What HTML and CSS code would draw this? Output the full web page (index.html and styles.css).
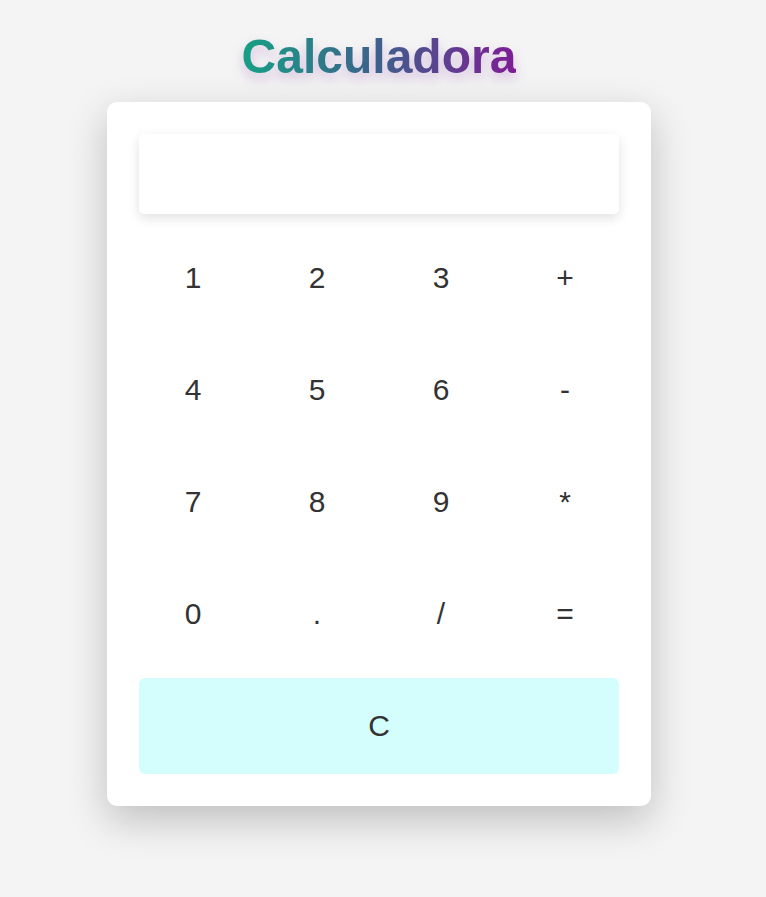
FILE: index.html
```html
<!DOCTYPE html>
<html lang="es">
<head>
<meta charset="utf-8">
<title>Calculadora</title>
<link rel="stylesheet" href="styles.css">
</head>
<body>
<main class="app">
  <h1 class="title">Calculadora</h1>
  <div class="calculator">
    <input class="display" type="text" readonly>
    <div class="keys">
      <button class="key">1</button>
      <button class="key">2</button>
      <button class="key">3</button>
      <button class="key">+</button>
      <button class="key">4</button>
      <button class="key">5</button>
      <button class="key">6</button>
      <button class="key">-</button>
      <button class="key">7</button>
      <button class="key">8</button>
      <button class="key">9</button>
      <button class="key">*</button>
      <button class="key">0</button>
      <button class="key">.</button>
      <button class="key">/</button>
      <button class="key">=</button>
    </div>
    <button class="clear">C</button>
  </div>
</main>
</body>
</html>
```

FILE: styles.css
```css
html, body {
  margin: 0;
  padding: 0;
  background: #f4f4f4;
  font-family: "Liberation Sans", Arial, sans-serif;
}

body {
  padding-right: 8px;
  min-height: 100vh;
  box-sizing: border-box;
}

.app {
  display: flex;
  flex-direction: column;
  align-items: center;
  padding-top: 29px;
  padding-bottom: 80px;
}

.title {
  margin: 0 0 18px;
  font-size: 48px;
  font-weight: 700;
  line-height: 55px;
  background: linear-gradient(90deg, #16a085 0%, #3e5f8c 50%, #7f1d94 100%);
  -webkit-background-clip: text;
  background-clip: text;
  color: transparent;
  filter: drop-shadow(0 6px 6px rgba(142, 68, 173, 0.3));
}

.calculator {
  width: 480px;
  padding: 32px;
  background: #fff;
  border-radius: 10px;
  box-shadow: 0 14px 40px rgba(0, 0, 0, 0.22);
  display: flex;
  flex-direction: column;
  gap: 16px;
}

.display {
  box-sizing: border-box;
  width: 100%;
  height: 80px;
  border: none;
  border-radius: 5px;
  background: #fff;
  box-shadow: 0 4px 12px rgba(0, 0, 0, 0.12);
  font-family: inherit;
  font-size: 32px;
  text-align: right;
  padding: 0 16px;
  outline: none;
}

.keys {
  display: grid;
  grid-template-columns: repeat(4, 108px);
  grid-auto-rows: 96px;
  gap: 16px;
}

.key,
.clear {
  border: none;
  background: transparent;
  font-family: inherit;
  font-size: 30px;
  color: #333;
  cursor: pointer;
  padding: 0;
}

.clear {
  height: 96px;
  background: #d4fefd;
  border-radius: 6px;
}
```
